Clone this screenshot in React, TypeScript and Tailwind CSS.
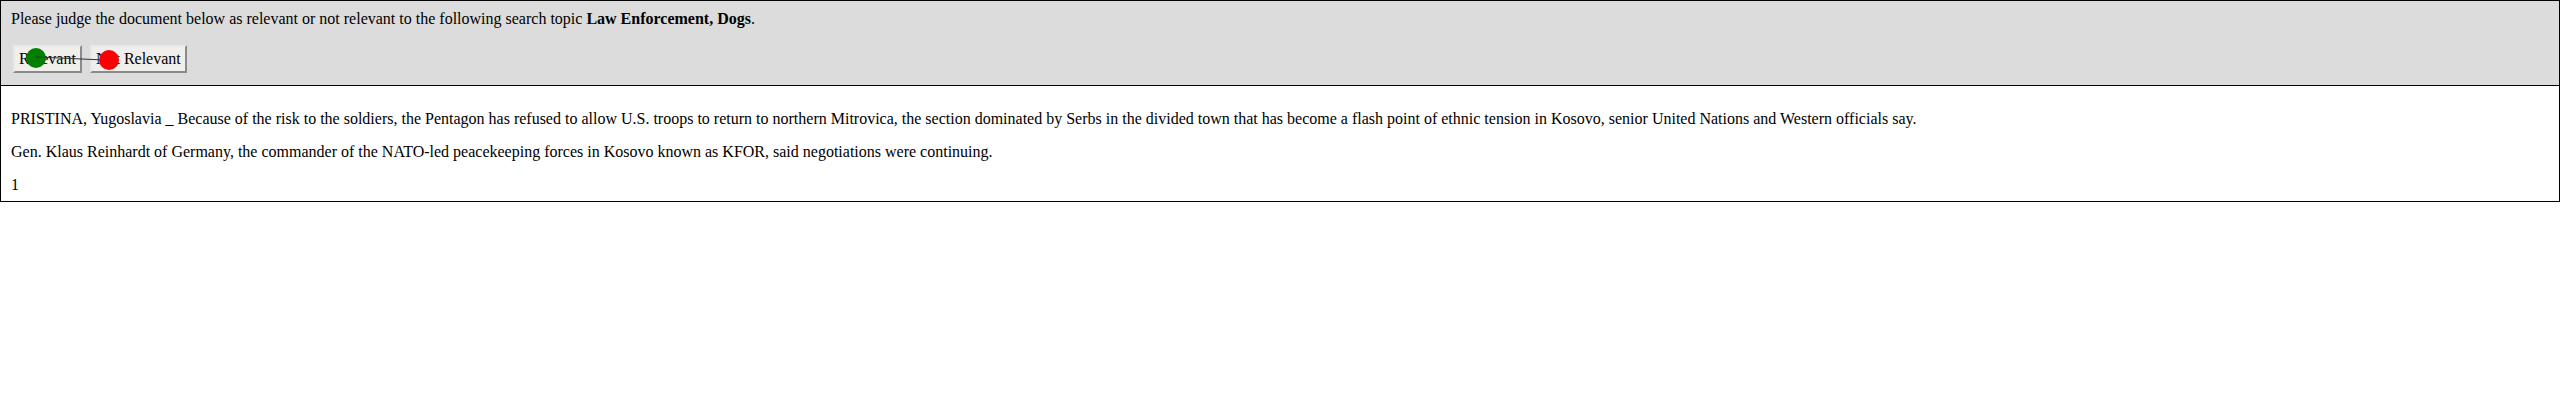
export default function App() {
  return (
    <div className="font-['Liberation_Serif',serif] text-[16px] leading-[18px] text-black">
      <div className="border border-black">
        <div className="relative bg-[#dcdcdc] border-b border-black px-[10px] pt-[9px] pb-[12px]">
          <div>
            Please judge the document below as relevant or not relevant to the following search topic{" "}
            <b>Law Enforcement, Dogs</b>.
          </div>
          <div className="mt-[17px] flex gap-[8px] pl-[2px]">
            <button className="h-[28px] px-[4px] bg-[#f0efec] border-2 border-t-[#e8e8e8] border-l-[#e8e8e8] border-b-[#8a8a8a] border-r-[#8a8a8a]">
              Relevant
            </button>
            <button className="h-[28px] px-[4px] bg-[#f0efec] border-2 border-t-[#e8e8e8] border-l-[#e8e8e8] border-b-[#8a8a8a] border-r-[#8a8a8a]">
              Not Relevant
            </button>
          </div>
          <svg className="absolute left-0 top-0" width="130" height="80" viewBox="0 0 130 80">
            <circle cx="35" cy="57" r="10" fill="#008000" />
            <line x1="35" y1="56" x2="104" y2="59" stroke="#333" strokeWidth="1.2" />
            <circle cx="108" cy="59" r="10" fill="#ff0000" />
          </svg>
        </div>
        <div className="px-[10px] pt-[8px] pb-[8px] leading-[17px]">
          <p className="my-[16px]">
            PRISTINA, Yugoslavia _ Because of the risk to the soldiers, the Pentagon has refused to allow U.S. troops to return to northern Mitrovica, the section dominated by Serbs in the divided town that has become a flash point of ethnic tension in Kosovo, senior United Nations and Western officials say.
          </p>
          <p className="my-[16px]">
            Gen. Klaus Reinhardt of Germany, the commander of the NATO-led peacekeeping forces in Kosovo known as KFOR, said negotiations were continuing.
          </p>
          <div>1</div>
        </div>
      </div>
    </div>
  )
}
